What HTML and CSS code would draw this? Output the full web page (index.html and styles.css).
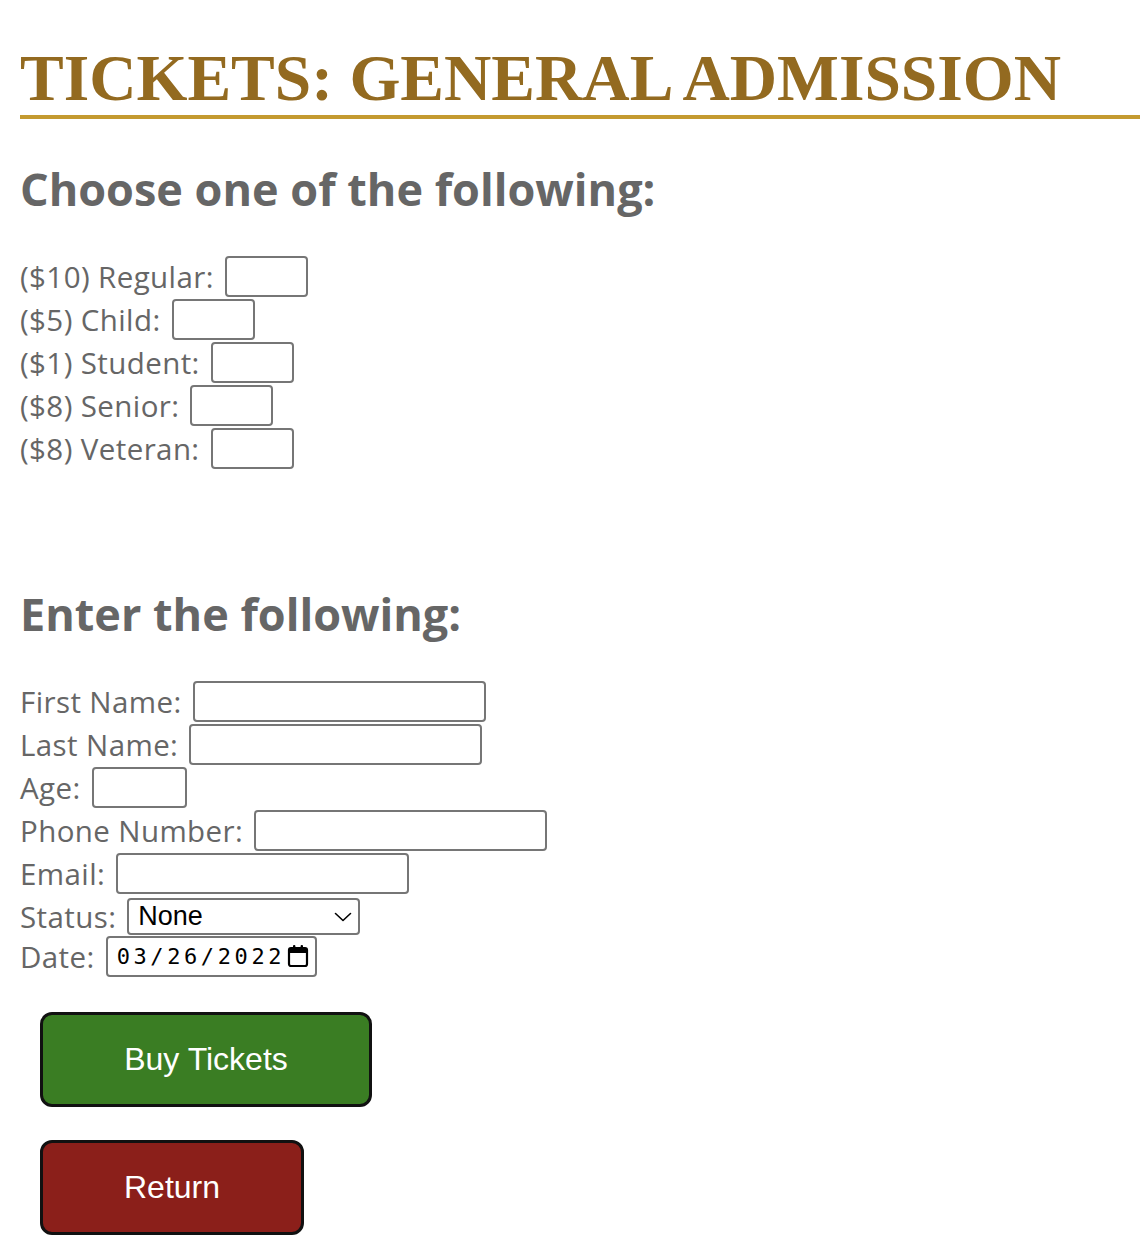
FILE: index.html
```html
<!DOCTYPE html>
<html>
<head>
<meta charset="utf-8">
<link rel="stylesheet" href="styles.css">
</head>
<body>
<h1 class="title">TICKETS: GENERAL ADMISSION</h1>
<form class="form">
  <h2 class="section">Choose one of the following:</h2>
  <div class="fields">
    <div class="row"><label>($10) Regular:</label><input class="num" type="text"></div>
    <div class="row"><label>($5) Child:</label><input class="num" type="text"></div>
    <div class="row"><label>($1) Student:</label><input class="num" type="text"></div>
    <div class="row"><label>($8) Senior:</label><input class="num" type="text"></div>
    <div class="row"><label>($8) Veteran:</label><input class="num" type="text"></div>
  </div>
  <h2 class="section second">Enter the following:</h2>
  <div class="fields">
    <div class="row"><label>First Name:</label><input class="wide" type="text"></div>
    <div class="row"><label>Last Name:</label><input class="wide" type="text"></div>
    <div class="row"><label>Age:</label><input class="age" type="text"></div>
    <div class="row"><label>Phone Number:</label><input class="wide" type="text"></div>
    <div class="row"><label>Email:</label><input class="wide" type="text"></div>
    <div class="row sel-row"><label>Status:</label>
      <span class="control">
        <select class="status"><option>None</option></select>
        <svg class="chevron" width="18" height="10" viewBox="0 0 18 10"><path d="M1.5 1.5 L9 8.5 L16.5 1.5" fill="none" stroke="#000" stroke-width="1.6" stroke-linecap="round" stroke-linejoin="round"/></svg>
      </span>
    </div>
    <div class="row"><label>Date:</label>
      <span class="control date-box">
        <span class="date-text">03/26/2022</span>
        <svg class="cal" width="22" height="24" viewBox="0 0 22 24"><rect x="2" y="4" width="18" height="18" rx="2" fill="none" stroke="#000" stroke-width="2.2"/><rect x="2" y="4" width="18" height="5" fill="#000"/><rect x="6" y="1" width="2.4" height="5" rx="1" fill="#000"/><rect x="13.6" y="1" width="2.4" height="5" rx="1" fill="#000"/></svg>
      </span>
    </div>
  </div>
  <div class="buttons">
    <button type="button" class="btn buy">Buy Tickets</button>
    <button type="button" class="btn ret">Return</button>
  </div>
</form>
</body>
</html>
```
FILE: styles.css
```css
html, body { margin: 0; padding: 0; background: #fff; }
body { padding: 0 0 0 20px; font-family: "Open Sans", sans-serif; }
.title {
  margin: 41px 0 0 0;
  font-family: "Liberation Serif", "Times New Roman", serif;
  font-weight: bold;
  font-size: 65.5px;
  line-height: 74px;
  color: #936a20;
  border-bottom: 4px solid #c49a30;
  white-space: nowrap;
}
.section {
  margin: 40px 0 36px 0;
  font-family: "Open Sans", sans-serif;
  font-weight: bold;
  font-size: 45px;
  line-height: 60px;
  color: #666;
}
.section.second { margin-top: 114px; }
.fields { display: flex; flex-direction: column; }
.row {
  display: flex;
  align-items: center;
  gap: 11px;
  height: 43px;
  font-size: 29.5px;
  letter-spacing: 0.4px;
  color: #666;
}
.row label { line-height: 43px; }
input, select {
  box-sizing: border-box;
  border: 2px solid #767676;
  border-radius: 4px;
  background: #fff;
  font-size: 14px;
  height: 41px;
  margin: 0;
}
.num { width: 83px; }
.wide { width: 293px; }
.age { width: 95px; }
.control { position: relative; display: inline-block; }
.sel-row { height: 38px; margin-top: 2px; }
.status {
  display: block;
  appearance: none;
  -webkit-appearance: none;
  width: 233px;
  height: 37px;
  font-family: "Liberation Sans", Arial, sans-serif;
  font-size: 27px;
  color: #000;
  padding: 0 9px;
  letter-spacing: 0;
}
.chevron { position: absolute; right: 8px; top: 14px; pointer-events: none; }
.date-box {
  box-sizing: border-box;
  width: 211px;
  height: 41px;
  border: 2px solid #767676;
  border-radius: 4px;
  display: flex;
  align-items: center;
  padding-left: 9px;
  color: #000;
}
.date-text {
  font-family: "DejaVu Sans Mono", monospace;
  font-size: 22px;
  letter-spacing: 3.6px;
}
.cal { position: absolute; left: 179px; top: 6px; }
.buttons {
  display: flex;
  flex-direction: column;
  align-items: flex-start;
  gap: 33px;
  margin: 34px 0 0 20px;
}
.btn {
  box-sizing: border-box;
  height: 95px;
  border: 3px solid #111;
  border-radius: 12px;
  color: #fff;
  font-family: "Liberation Sans", Arial, sans-serif;
  font-size: 32px;
  cursor: pointer;
}
.buy { width: 332px; background: #3a7d23; }
.ret { width: 264px; background: #8b1f1a; }
```
